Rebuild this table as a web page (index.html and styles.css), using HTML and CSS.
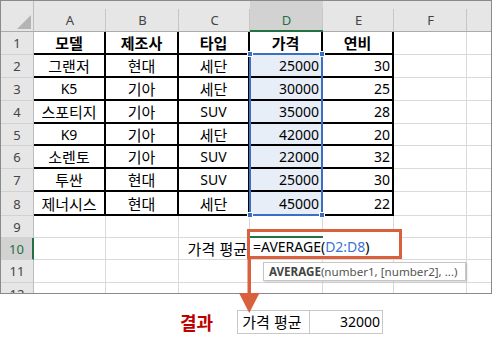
FILE: index.html
```html
<!DOCTYPE html>
<html lang="ko">
<head>
<meta charset="utf-8">
<title>AVERAGE</title>
<link rel="stylesheet" href="styles.css">
</head>
<body>
<div class="page">
  <div class="sheet">
    <div class="grid">
      <div class="corner"><span class="tri"></span></div>
      <div class="ch">A</div><div class="ch">B</div><div class="ch">C</div><div class="ch on">D</div><div class="ch">E</div><div class="ch">F</div><div class="ch"></div>

      <div class="rh">1</div>
      <div class="c t b">모델</div><div class="c t b">제조사</div><div class="c t b">타입</div><div class="c t b">가격</div><div class="c t b">연비</div><div class="c"></div><div class="c"></div>

      <div class="rh">2</div>
      <div class="c t">그랜저</div><div class="c t">현대</div><div class="c t">세단</div><div class="c t r n sel">25000</div><div class="c t r n">30</div><div class="c"></div><div class="c"></div>

      <div class="rh">3</div>
      <div class="c t n">K5</div><div class="c t">기아</div><div class="c t">세단</div><div class="c t r n sel">30000</div><div class="c t r n">25</div><div class="c"></div><div class="c"></div>

      <div class="rh">4</div>
      <div class="c t">스포티지</div><div class="c t">기아</div><div class="c t n">SUV</div><div class="c t r n sel">35000</div><div class="c t r n">28</div><div class="c"></div><div class="c"></div>

      <div class="rh">5</div>
      <div class="c t n">K9</div><div class="c t">기아</div><div class="c t">세단</div><div class="c t r n sel">42000</div><div class="c t r n">20</div><div class="c"></div><div class="c"></div>

      <div class="rh">6</div>
      <div class="c t">소렌토</div><div class="c t">기아</div><div class="c t n">SUV</div><div class="c t r n sel">22000</div><div class="c t r n">32</div><div class="c"></div><div class="c"></div>

      <div class="rh">7</div>
      <div class="c t">투싼</div><div class="c t">현대</div><div class="c t n">SUV</div><div class="c t r n sel">25000</div><div class="c t r n">30</div><div class="c"></div><div class="c"></div>

      <div class="rh">8</div>
      <div class="c t">제너시스</div><div class="c t">현대</div><div class="c t">세단</div><div class="c t r n sel">45000</div><div class="c t r n">22</div><div class="c"></div><div class="c"></div>

      <div class="rh">9</div>
      <div class="c"></div><div class="c"></div><div class="c"></div><div class="c"></div><div class="c"></div><div class="c"></div><div class="c"></div>

      <div class="rh on">10</div>
      <div class="c"></div><div class="c"></div><div class="c r label10">가격 평균</div><div class="c"></div><div class="c"></div><div class="c"></div><div class="c"></div>

      <div class="rh">11</div>
      <div class="c"></div><div class="c"></div><div class="c"></div><div class="c"></div><div class="c"></div><div class="c"></div><div class="c"></div>

      <div class="rh">12</div>
      <div class="c"></div><div class="c"></div><div class="c"></div><div class="c"></div><div class="c"></div><div class="c"></div><div class="c"></div>
    </div>
  </div>

  <div class="result">
    <span class="result-label">결과</span>
    <table class="res">
      <tr><td class="res-name">가격 평균</td><td class="res-val">32000</td></tr>
    </table>
  </div>

  <div class="selection">
    <i class="hd tl"></i><i class="hd tr"></i><i class="hd bl"></i><i class="hd br"></i>
  </div>

  <div class="editbox">
    <div class="active-top"></div>
    <div class="formula">=AVERAGE(<span class="ref">D2:D8</span>)</div>
  </div>

  <div class="tip"><b>AVERAGE</b>(number1, [number2], ...)</div>

  <svg class="arrow" width="21" height="57" viewBox="0 0 21 57">
    <rect x="8.5" y="2" width="3.5" height="35" fill="#d9603c"/>
    <polygon points="0,36 20.5,36 10.25,56" fill="#d9603c"/>
  </svg>
</div>
</body>
</html>
```

FILE: styles.css
```css
* { box-sizing: border-box; }

body {
  margin: 0;
  background: #fff;
  font-family: "Noto Sans CJK KR", sans-serif;
}

.page {
  position: relative;
  width: 493px;
  height: 352px;
}

.sheet {
  width: 492px;
  height: 294px;
  border: 1px solid #8a8a8a;
  overflow: hidden;
}

.grid {
  display: grid;
  grid-template-columns: 33px 72px 73px 71px 73px 71px 73px 73px;
  grid-template-rows: 31px 23px 23px 23px 23px 22px 23px 23px 24px 22px 22px 23px 23px;
  width: 562px;
}

.corner {
  background: #e6e6e6;
  border-right: 1px solid #bdbdbd;
  border-bottom: 1px solid #ababab;
  display: flex;
  align-items: flex-end;
  justify-content: flex-end;
  padding: 0 2px 2px 0;
}

.tri {
  width: 14px;
  height: 14px;
  background: #b4b4b4;
  clip-path: polygon(100% 0, 100% 100%, 0 100%);
}

.ch {
  background: #e6e6e6 linear-gradient(#c6c6c6, #c6c6c6) no-repeat right bottom / 1px 22px;
  border-bottom: 1px solid #ababab;
  padding-top: 8px;
  display: flex;
  align-items: center;
  justify-content: center;
  font: 13px "Noto Sans", sans-serif;
  color: #444;
}

.ch.on {
  background-color: #d2d2d2;
  color: #1e7145;
  border-bottom: 2px solid #217346;
}

.rh {
  background: #e6e6e6;
  border-right: 1px solid #bdbdbd;
  border-bottom: 1px solid #d2d2d2;
  display: flex;
  align-items: center;
  justify-content: center;
  font: 13px "Noto Sans", sans-serif;
  color: #444;
}

.rh.on {
  background: #d2d2d2;
  color: #1e7145;
  border-right: 2px solid #217346;
}

.c {
  border-right: 1px solid #dadada;
  border-bottom: 1px solid #dadada;
  display: flex;
  align-items: center;
  justify-content: center;
  font-size: 15px;
  color: #000;
  white-space: nowrap;
}

.c.t {
  border-right: 2px solid #000;
  border-bottom: 2px solid #000;
}

.c.b { font-weight: 700; }

.c.r {
  justify-content: flex-end;
  padding-right: 2px;
}

.c.n {
  font-family: "Noto Sans", sans-serif;
  font-size: 14px;
}

.c.sel { background: #e8eef8; }

.label10 { padding-right: 1px; }

.result {
  display: flex;
  align-items: center;
  margin-top: 16px;
  padding-left: 180px;
  gap: 24px;
}

.result-label {
  font-size: 18px;
  font-weight: 700;
  color: #c00000;
  line-height: 22px;
}

.res {
  border-collapse: collapse;
}

.res td {
  border: 1px solid #c9c9c9;
  height: 23px;
  padding: 0;
  font-size: 15px;
  line-height: 20px;
}

.res-name {
  width: 72px;
  padding-left: 4px !important;
}

.res-val {
  width: 73px;
  text-align: right;
  padding-right: 2px !important;
  font-family: "Noto Sans", sans-serif;
  font-size: 14px !important;
}

.selection {
  position: absolute;
  left: 249px;
  top: 53px;
  width: 74px;
  height: 163px;
  border: 2px solid #3c6fc4;
}

.hd {
  position: absolute;
  width: 6px;
  height: 6px;
  background: #3c6fc4;
  border: 1px solid #fff;
}
.hd.tl { left: -4px; top: -4px; }
.hd.tr { right: -4px; top: -4px; }
.hd.bl { left: -4px; bottom: -4px; }
.hd.br { right: -4px; bottom: -4px; }

.editbox {
  position: absolute;
  left: 247px;
  top: 229px;
  width: 155px;
  height: 30px;
  border: 3px solid #d9603c;
  background: #fff;
  padding-top: 4px;
}

.active-top {
  width: 73px;
  height: 2px;
  background: #217346;
}

.formula {
  padding-left: 3px;
  font: 14px/18px "Noto Sans", sans-serif;
  color: #000;
  white-space: nowrap;
}

.ref { color: #3b73d6; }

.tip {
  position: absolute;
  left: 263px;
  top: 262px;
  width: 203px;
  height: 19px;
  border: 1px solid #c6c6c6;
  background: #fff;
  box-shadow: 1px 1px 2px rgba(0, 0, 0, 0.18);
  padding-left: 5px;
  font: 11.6px/17px "Noto Sans", sans-serif;
  color: #555;
  white-space: nowrap;
}

.tip b {
  color: #444;
  font-weight: 700;
}

.arrow {
  position: absolute;
  left: 239px;
  top: 257px;
}
```
